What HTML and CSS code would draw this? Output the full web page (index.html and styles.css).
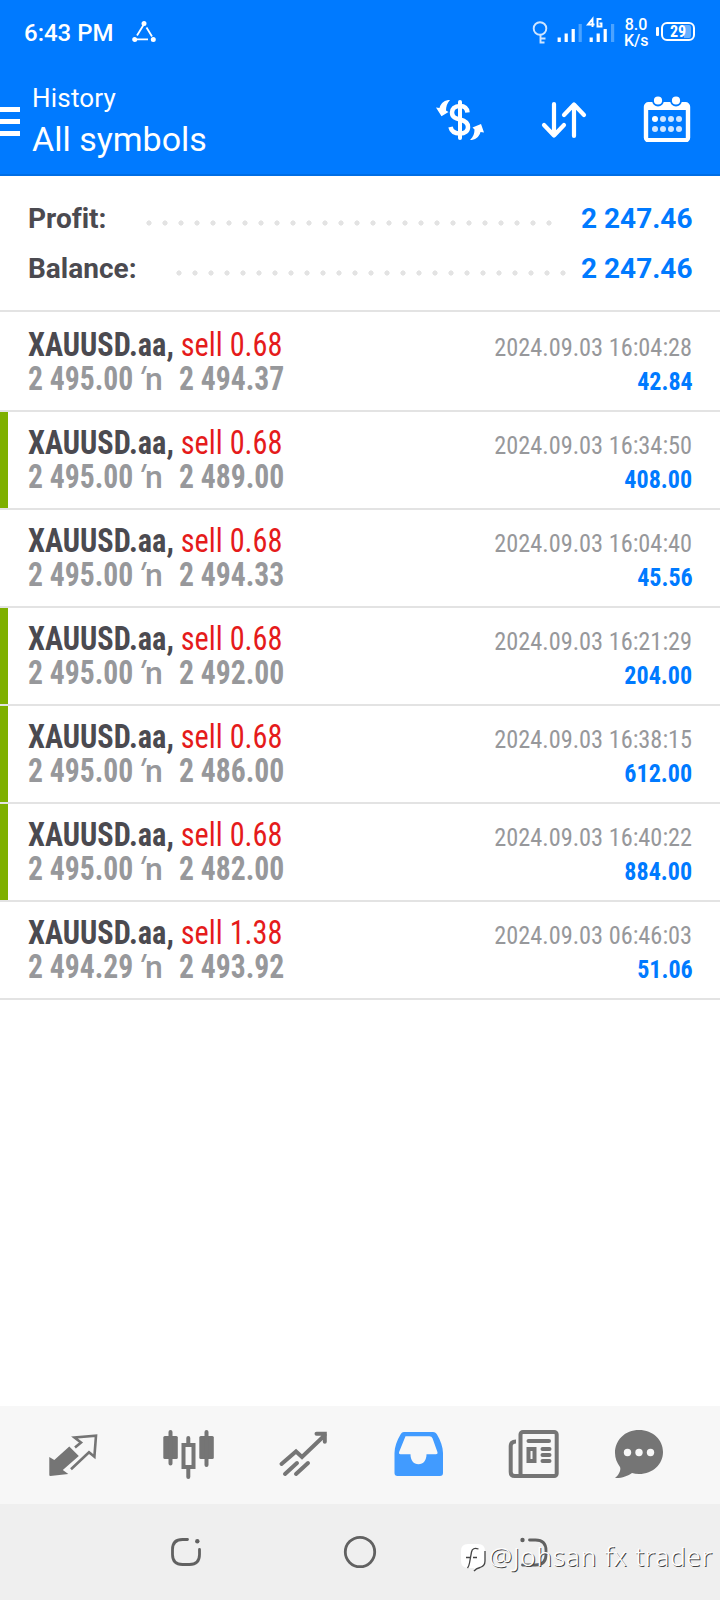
FILE: index.html
```html
<!DOCTYPE html>
<html lang="en">
<head>
<meta charset="utf-8">
<title>History</title>
<link rel="stylesheet" href="styles.css">
</head>
<body>
<div class="app">
  <header class="top">
    <div class="status">
      <span class="clock">6:43 PM</span>
      <svg class="tri" width="26" height="24" viewBox="0 0 26 24" fill="#fff" stroke="#fff" stroke-width="1.8"><circle cx="13" cy="3.5" r="1.6"/><circle cx="3.7" cy="19.5" r="1.6"/><circle cx="22.3" cy="19.5" r="1.6"/><path d="M12.500 5 6 15.500M15.500 7.500 21 16.500M6 19.300h11"/></svg>
      <svg class="signals" width="76" height="32" viewBox="0 0 76 32" fill="#fff"><g fill="none" stroke="#cfe5ff" stroke-width="1.900"><circle cx="8" cy="12.500" r="6.300"/><path d="M8.500 19v8.500M8.500 22.500h5M8.500 26.500h4"/></g><path d="M25.600 21.500h3.200v4.500h-3.200zM32.600 17.500h3.200V26h-3.200zM39.600 13h3.200v13h-3.200zM57.600 21.500h3.200v4.500h-3.200zM64.600 17.500h3.200V26h-3.200zM71.600 13h3.200v13h-3.200z"/><path fill="#4ca3ff" d="M46.600 8h3.200v18h-3.200z"/><g fill="none" stroke="#fff" stroke-width="1.900"><path d="M60.500 11V3l-4.500 5.500h6.500M69.500 3h-4v7.500h4V7.500h-2"/></g></svg>
      <svg class="lastbar" width="4" height="18"><path fill="#4ca3ff" d="M0 0h3.200v18H0z"/></svg>
      <span class="rate">8.0<br>K/s</span>
      <span class="plug"></span>
      <span class="battery">29</span>
    </div>
    <div class="bar">
      <svg class="menu" width="20" height="30" fill="#fff"><path d="M0 0h20v5H0zM0 12h20v5H0zM0 24h20v5H0z"/></svg>
      <div class="titles"><div class="t1">History</div><div class="t2">All symbols</div></div>
      <svg class="actions" width="260" height="50" viewBox="434 92 260 50" fill="none" stroke="#fff">
        <path d="M460 102v36" stroke-width="4" stroke-linecap="round"/>
        <path d="M467.500 112.500c-.5-4.500-3.500-6.500-7.500-6.500-5.500 0-8 3-8 6.500 0 5 4 6 8 7s8 2.500 8 7.500c0 4-3 6.500-8 6.500s-8.500-2-9.500-6.500" stroke-width="4.500"/>
        <path fill="#fff" stroke="none" d="M450 100c-5 0-9 2.500-10.500 8l-3.500-.5 5.500 8.700 7-4.200-2.500-1.500c0-4 1-7 4-10.500zM470 140c5 0 9-2.500 10.500-8l3.500.5-3-8.500-8.500 3.500 2 2c0 4-1 7-4.500 10.500z"/>
        <path d="M554 104v31M544 125l10 10.500 10-10.500M574 136v-31M564 115l10-10.500 10 10.500" stroke-width="4.200" stroke-linecap="round" stroke-linejoin="round"/>
        <rect x="646" y="104.300" width="42" height="36" rx="2.500" stroke-width="4.400"/><path d="M645 104h44v6h-44z" fill="#fff" stroke="none"/>
        <g fill="#fff" stroke="#007aff" stroke-width="1.800"><circle cx="658" cy="100.500" r="5"/><circle cx="676" cy="100.500" r="5"/></g>
        <g fill="#cfe5ff" stroke="none"><circle cx="655" cy="119" r="3" fill="#fff"/><circle cx="663" cy="119" r="3"/><circle cx="671" cy="119" r="3"/><circle cx="679" cy="119" r="3"/><circle cx="655" cy="129" r="3"/><circle cx="663" cy="129" r="3"/><circle cx="671" cy="129" r="3"/><circle cx="679" cy="129" r="3"/></g>
      </svg>
    </div>
  </header>
  <section class="summary">
    <div class="line"><span class="label">Profit:</span><span class="dots d1"></span><span class="sum">2 247.46</span></div>
    <div class="line"><span class="label">Balance:</span><span class="dots d2"></span><span class="sum">2 247.46</span></div>
  </section>
  <main class="deals">
    <article class="deal"><div class="row"><span class="sym"><b>XAUUSD.aa,</b> sell 0.68</span><span class="date">2024.09.03 16:04:28</span></div><div class="row"><div class="price"><span class="num">2 495.00</span><i><u>'</u>n</i><span class="num">2 494.37</span></div><span class="gain">42.84</span></div></article>
    <article class="deal tp"><div class="row"><span class="sym"><b>XAUUSD.aa,</b> sell 0.68</span><span class="date">2024.09.03 16:34:50</span></div><div class="row"><div class="price"><span class="num">2 495.00</span><i><u>'</u>n</i><span class="num">2 489.00</span></div><span class="gain">408.00</span></div></article>
    <article class="deal"><div class="row"><span class="sym"><b>XAUUSD.aa,</b> sell 0.68</span><span class="date">2024.09.03 16:04:40</span></div><div class="row"><div class="price"><span class="num">2 495.00</span><i><u>'</u>n</i><span class="num">2 494.33</span></div><span class="gain">45.56</span></div></article>
    <article class="deal tp"><div class="row"><span class="sym"><b>XAUUSD.aa,</b> sell 0.68</span><span class="date">2024.09.03 16:21:29</span></div><div class="row"><div class="price"><span class="num">2 495.00</span><i><u>'</u>n</i><span class="num">2 492.00</span></div><span class="gain">204.00</span></div></article>
    <article class="deal tp"><div class="row"><span class="sym"><b>XAUUSD.aa,</b> sell 0.68</span><span class="date">2024.09.03 16:38:15</span></div><div class="row"><div class="price"><span class="num">2 495.00</span><i><u>'</u>n</i><span class="num">2 486.00</span></div><span class="gain">612.00</span></div></article>
    <article class="deal tp"><div class="row"><span class="sym"><b>XAUUSD.aa,</b> sell 0.68</span><span class="date">2024.09.03 16:40:22</span></div><div class="row"><div class="price"><span class="num">2 495.00</span><i><u>'</u>n</i><span class="num">2 482.00</span></div><span class="gain">884.00</span></div></article>
    <article class="deal"><div class="row"><span class="sym"><b>XAUUSD.aa,</b> sell 1.38</span><span class="date">2024.09.03 06:46:03</span></div><div class="row"><div class="price"><span class="num">2 494.29</span><i><u>'</u>n</i><span class="num">2 493.92</span></div><span class="gain">51.06</span></div></article>
  </main>
  <nav class="tabs">
    <svg width="52" height="52" viewBox="48 1428 52 52"><path fill="#757575" d="M49.300 1457l5 3 15-13.500 9.500 9.500-16 14 5.500 4-18 2q-1 0-1-1z"/><path fill="none" stroke="#757575" stroke-width="2.600" d="M75 1447.500l6-5-6.500-5 21.500-1.800-1.600 21-5.400-4.500-18 17"/></svg>
    <svg width="52" height="52" viewBox="163 1428 52 52"><g fill="#757575"><rect x="163.300" y="1436" width="14.500" height="23" rx="1.500"/><rect x="199.300" y="1436" width="14.500" height="23" rx="1.500"/></g><g fill="none" stroke="#757575" stroke-width="4"><path stroke-linecap="round" d="M170.500 1432v31.500M206.500 1432v33M188.300 1438v6M188.300 1468v9"/><rect x="183.500" y="1445" width="10" height="22"/></g></svg>
    <svg width="52" height="52" viewBox="278 1428 52 52" fill="none" stroke="#757575" stroke-width="4" stroke-linecap="round"><path d="M281.500 1464l14.500-12.500 6 5.500 23-22M316.500 1433.700h8.300v8M285 1474l12-11M296 1474l12-11"/></svg>
    <svg width="52" height="52" viewBox="393 1428 52 52"><path fill="#419bff" fill-rule="evenodd" d="M404 1432h29c2 0 3 1 4 2.500 3.500 6 6 12.500 6 18.500v20q0 3-3 3h-42.500q-3 0-3-3v-20c0-6 2.500-12.500 6-18.500 1-1.500 1.500-2.500 3.500-2.500zm1.500 4.200-6.500 16q-.5 2 1.500 2h10c0 6 3 10 8 10s8-4 8-10h9.500q2 0 1.500-2l-5-14q-.8-2-3-2z"/></svg>
    <svg width="52" height="52" viewBox="508 1428 52 52" fill="none" stroke="#757575" stroke-width="4"><rect x="520.500" y="1432" width="36.200" height="44" rx="2.500"/><path d="M516 1441.500q-5.300 0-5.300 4.500v26q0 4 4 4h8"/><path stroke-linecap="round" d="M528.500 1441H549M542.500 1449h7M542.500 1455h7M542.500 1461h7"/><rect x="528.500" y="1449" width="6" height="12"/></svg>
    <svg width="52" height="52" viewBox="613 1428 52 52"><path fill="#757575" d="M615 1478c5-4 6-9 5-11-3-4-5-9-5-14 0-13 10-23 24-23s24 10 24 22-10 22-24 22q-4 0-7-1c-4 3-11 5.500-17 5z"/><g fill="#f7f7f7"><circle cx="627.500" cy="1452.500" r="3.700"/><circle cx="639" cy="1452.500" r="3.700"/><circle cx="650.500" cy="1452.500" r="3.700"/></g></svg>
  </nav>
  <footer class="system">
    <svg width="720" height="96" viewBox="0 1504 720 96" fill="none" stroke="#616161" stroke-width="2.800" stroke-linecap="round"><path d="M187.500 1539.500h-5q-10 0-10 10v5q0 10 10 10h7q10 0 10-10v-5"/><circle cx="360" cy="1552" r="14.700"/><path d="M529.500 1540h6q10.500 0 10.500 10.500v4q0 10.500-10.500 10.500h-13"/><g fill="#616161" stroke="none"><circle cx="197.300" cy="1541.300" r="2.200"/><circle cx="522.500" cy="1540" r="2.200"/></g></svg>
    <div class="mark"><svg width="26" height="30" viewBox="0 0 26 30"><path fill="#fff" d="M8 1h10q7 0 7 7v10q0 5-5 6.500-4 1-6 3.500v-3H8q-7 0-7-7V8q0-7 7-7z"/><path fill="none" stroke="#444" stroke-width="1.300" d="M18.500 6q-6-2-7 3l-2 11q-.5 3-2 5M6 14.500h4M13 14.500h4M25 8v10q0 5-5 6.500-4 1-6 3.500"/></svg><span>@Johsan fx trader</span></div>
  </footer>
</div>
</body>
</html>
```
FILE: styles.css
```css
* { box-sizing: border-box; }
body { margin: 0; background: #fff; font-family: Roboto, "Liberation Sans", sans-serif; }
.app { width: 720px; height: 1600px; display: flex; flex-direction: column; overflow: hidden; }
svg { display: block; flex: none; }
.top { height: 176px; background: #007aff; border-bottom: 2px solid #006ee5; color: #fff; }
.status { height: 64px; display: flex; align-items: flex-start; padding-left: 24px; }
.clock { width: 90px; margin-top: 19px; font-size: 24px; line-height: 28px; font-weight: 500; white-space: nowrap; }
.tri { margin: 20px 0 0 17px; }
.signals { margin: 16px 0 0 375px; }
.lastbar { margin: 24px 0 0 3px; }
.rate { width: 24px; margin: 17px 0 0 9px; font-size: 16px; line-height: 16px; font-weight: 500; text-align: center; white-space: nowrap; }
.plug { width: 3px; height: 9px; margin: 27px 0 0 8px; border-radius: 1px; background: #fff; }
.battery { width: 34px; height: 19px; margin: 22px 0 0 2px; border: 2px solid #fff; border-radius: 6px; background: linear-gradient(90deg, transparent 75%, #66b0ff 75%) content-box; padding: 1px 2px; font-size: 16px; font-stretch: 85%; line-height: 14px; font-weight: 700; text-align: center; }
.bar { display: flex; align-items: flex-start; }
.menu { margin-top: 43px; }
.titles { width: 402px; padding: 19px 0 0 12px; }
.t1 { font-size: 26px; line-height: 30px; letter-spacing: 0.2px; }
.t2 { margin-top: 6px; font-size: 34px; line-height: 40px; }
.actions { margin: 28px 0 0 12px; }
.summary { height: 136px; padding: 17px 28px 0; border-bottom: 2px solid #e3e3e3; }
.line { height: 50px; display: flex; align-items: center; font-size: 28px; font-weight: 700; color: #4b4a50; font-variant-ligatures: none; }
.label { flex: none; }
.sum { width: 111px; color: #007aff; text-align: right; white-space: nowrap; }
.dots { flex: none; height: 6px; margin: 9px 0 0 auto; background: radial-gradient(circle at 3px 3px, #e3e3e3 2.300px, transparent 2.900px) 0 0 / 16px 6px; }
.d1 { width: 406px; margin-right: 29px; }
.d2 { width: 390px; margin-right: 15px; }
.deals { padding-top: 2px; }
.deal { height: 98px; padding: 14px 28px 0; border-bottom: 2px solid #e3e3e3; }
.tp { background: linear-gradient(#7eb000, #7eb000) no-repeat 0 0 / 8px 100%; }
.row { height: 34px; display: flex; justify-content: space-between; align-items: baseline; font-stretch: 75%; font-family: "Roboto Condensed", Roboto, sans-serif; line-height: 34px; white-space: nowrap; }
.sym { font-size: 33px; color: #e51b1b; transform: scaleX(0.918); transform-origin: left; }
.sym b { color: #4b4a50; }
.price { display: flex; align-items: baseline; font-size: 33px; color: #97989b; }
.num { width: 111px; font-weight: 700; transform: scaleX(0.898); transform-origin: left; }
.price i { width: 40px; font-size: 32px; font-style: normal; font-weight: 500; font-stretch: 100%; font-family: Roboto, sans-serif; }
.price u { display: inline-block; width: 6px; text-decoration: none; transform: translateX(-1px) skewX(-20deg); }
.date { font-size: 26.5px; color: #97989b; transform: translateX(0.5px) scaleX(0.918); transform-origin: right; }
.gain { font-size: 26.5px; font-weight: 700; color: #007aff; transform: translateX(0.5px) scaleX(0.908); transform-origin: right; }
.tabs { height: 98px; margin-top: auto; padding: 22px 0 0 48px; display: flex; gap: 63px; background: #f7f7f7; }
.tabs svg:last-child { margin-left: -10px; }
.system { height: 96px; background: #efefef; position: relative; }
.mark { position: absolute; left: 460px; top: 39px; display: flex; color: #fff; font: 300 26px/30px "Noto Sans", sans-serif; text-shadow: 1px 1px 0.5px #444; white-space: nowrap; }
.mark span { margin: -2px 0 0 3px; letter-spacing: 0.85px; }
```
